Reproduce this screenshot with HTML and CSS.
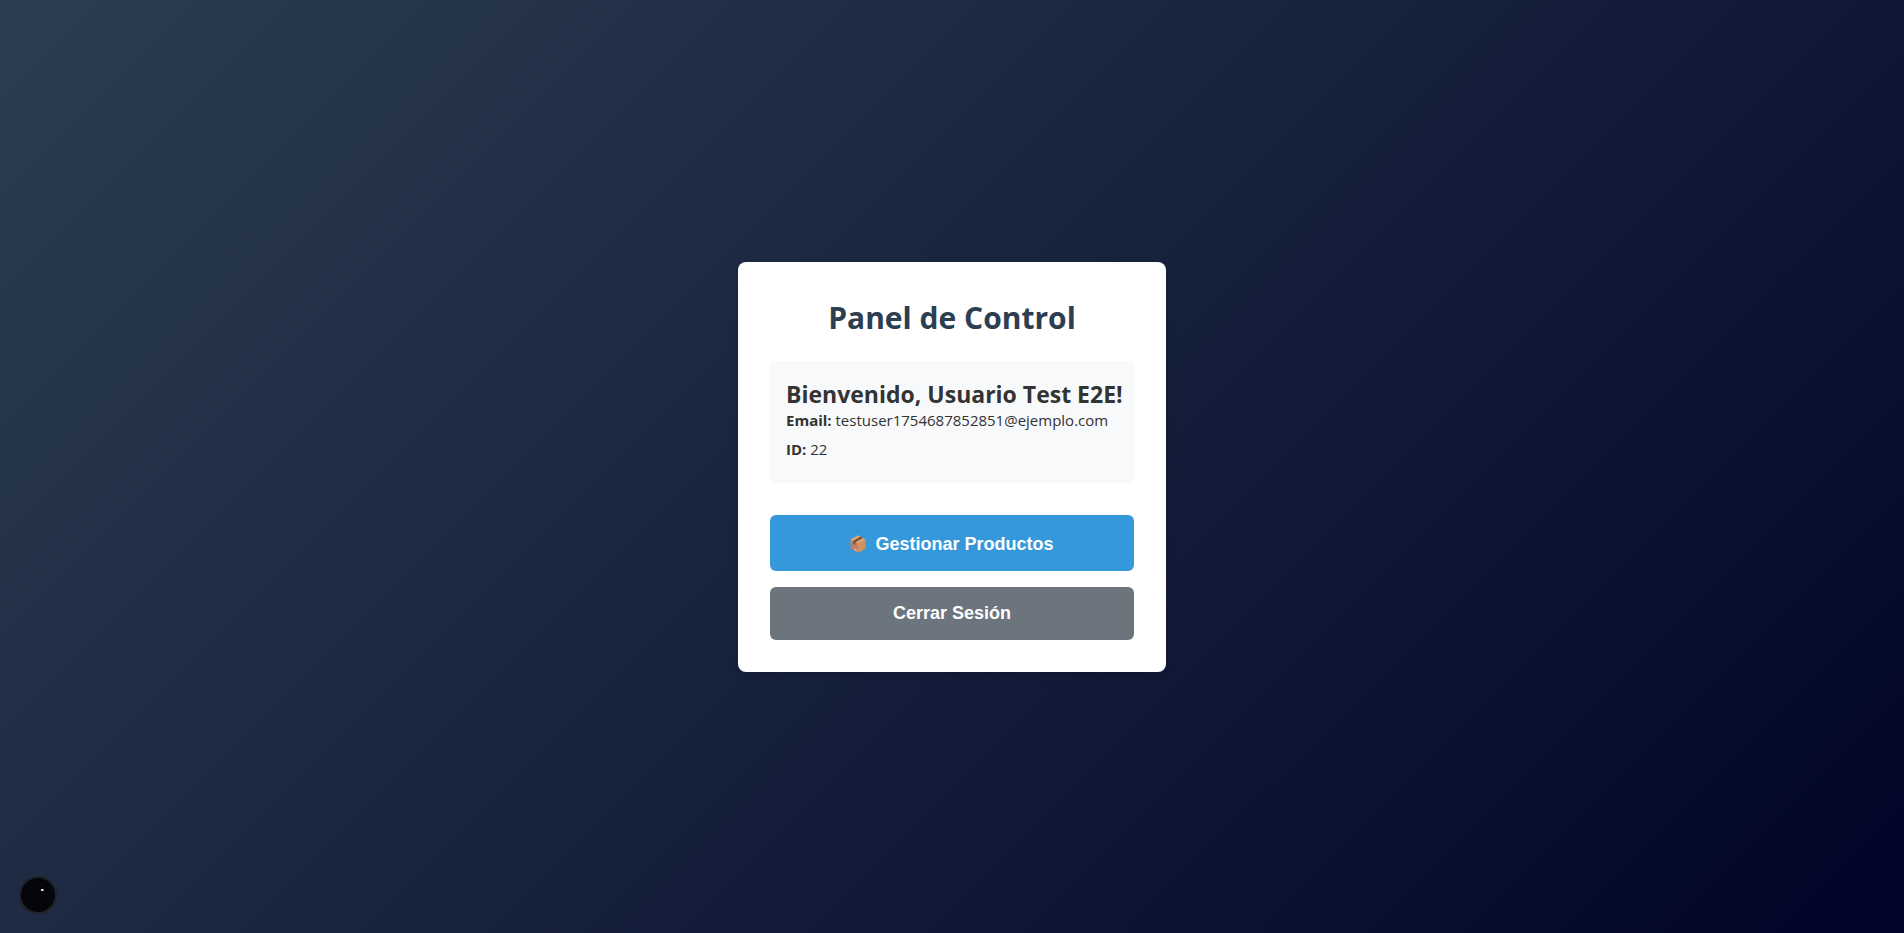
FILE: index.html
```html
<!DOCTYPE html>
<html lang="es">
<head>
<meta charset="utf-8">
<meta name="viewport" content="width=device-width, initial-scale=1">
<title>Panel de Control</title>
<link rel="stylesheet" href="styles.css">
</head>
<body>
<main class="dashboard">
  <section class="card">
    <h1 class="card-title">Panel de Control</h1>
    <div class="user-info">
      <h2 class="welcome">Bienvenido, Usuario Test E2E!</h2>
      <p class="detail"><strong>Email:</strong> testuser1754687852851@ejemplo.com</p>
      <p class="detail"><strong>ID:</strong> 22</p>
    </div>
    <div class="actions">
      <button type="button" class="btn btn-primary">
        <svg class="box-icon" viewBox="0 0 16 18" aria-hidden="true">
          <path d="M0.5 4.5 8 8.5V18L0.5 13.5Z" fill="#bd8166"/>
          <path d="M15.5 4.5 8 8.5V18L15.5 13.5Z" fill="#cf935f"/>
          <path d="M0.5 4.5 8 0.2 15.5 4.5 8 8.7Z" fill="#dca673"/>
          <path d="M3.2 5.9 10.6 1.6 12.8 2.9 5.4 7.2V9.8L3.2 8.5Z" fill="#7d4b36"/>
          <path d="M4.5 13.2 6.8 14.5V16.3L4.5 15Z" fill="#dcb9b4"/>
        </svg>
        <span>Gestionar Productos</span>
      </button>
      <button type="button" class="btn btn-secondary">Cerrar Sesión</button>
    </div>
  </section>
</main>
<button type="button" class="dev-badge" aria-label="Herramientas">
  <svg viewBox="0 0 38 38" aria-hidden="true">
    <circle cx="19" cy="19" r="18" fill="#05060b" stroke="#222326" stroke-width="2"/>
    <path d="M22 13h2v2h-2z" fill="#e4e4e6"/>
    <path d="M24 13h1v2h-1z" fill="#77777b"/>
  </svg>
</button>
</body>
</html>
```
FILE: styles.css
```css
* {
  box-sizing: border-box;
  margin: 0;
  padding: 0;
}

body {
  min-height: 100vh;
  font-family: "Segoe UI", "Open Sans", sans-serif;
  color: #333;
  background: linear-gradient(135deg, #2c3e50, #000428);
}

.dashboard {
  display: flex;
  align-items: center;
  justify-content: center;
  min-height: 100vh;
}

.card {
  width: 100%;
  max-width: 428px;
  padding: 32px;
  border-radius: 8px;
  background: #fff;
  box-shadow: 0 4px 6px rgba(0, 0, 0, 0.1);
}

.card-title {
  margin-bottom: 20px;
  font-size: 30px;
  line-height: 47px;
  text-align: center;
  color: #2c3e50;
}

.user-info {
  margin-bottom: 32px;
  padding: 17px 11px 15px 16px;
  border-radius: 4px;
  background: #f8f9fa;
}

.welcome {
  font-size: 23px;
  line-height: 32px;
}

.detail {
  margin-bottom: 8px;
  font-size: 15px;
  line-height: 21px;
}

.actions {
  display: flex;
  flex-direction: column;
  gap: 16px;
}

.btn {
  display: flex;
  align-items: center;
  justify-content: center;
  gap: 9px;
  width: 100%;
  padding: 16px;
  border: 0;
  border-radius: 6px;
  font: bold 18px/21px Arial, "Liberation Sans", sans-serif;
  color: #fff;
  cursor: pointer;
}

.btn-primary {
  padding: 17px 16px 15px;
  line-height: 24px;
  background: #3498db;
}

.btn-secondary {
  background: #6c757d;
}

.box-icon {
  width: 16px;
  height: 18px;
}

.dev-badge {
  position: fixed;
  left: 19px;
  bottom: 19px;
  width: 38px;
  height: 38px;
  border: 0;
  border-radius: 50%;
  background: none;
  cursor: pointer;
}

.dev-badge svg {
  display: block;
}
```
